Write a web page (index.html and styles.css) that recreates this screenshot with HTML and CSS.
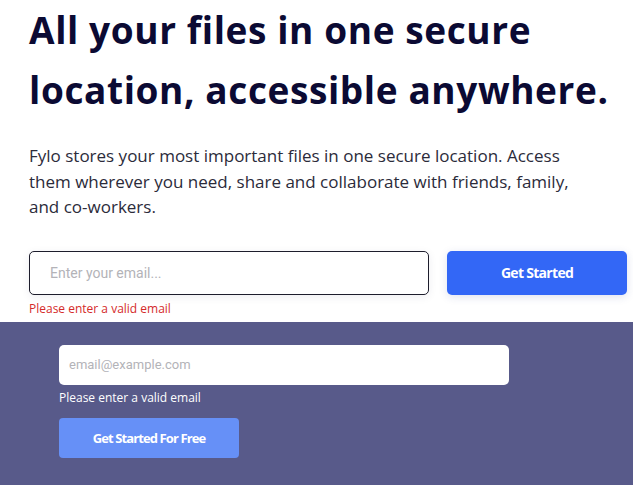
FILE: index.html
```html
<!DOCTYPE html>
<html lang="en">
<head>
<meta charset="utf-8">
<title>Fylo</title>
<link rel="stylesheet" href="styles.css">
</head>
<body>
  <section class="hero">
    <h1 class="hero__title">All your files in one secure location, accessible anywhere.</h1>
    <p class="hero__text">Fylo stores your most important files in one secure location. Access them wherever you need, share and collaborate with friends, family, and co-workers.</p>
    <form class="hero__form">
      <div class="field">
        <input class="field__input" type="email" placeholder="Enter your email...">
        <span class="field__error">Please enter a valid email</span>
      </div>
      <button class="btn btn--primary" type="button">Get Started</button>
    </form>
  </section>
  <section class="cta">
    <form class="cta__form">
      <input class="cta__input" type="email" placeholder="email@example.com">
      <span class="cta__error">Please enter a valid email</span>
      <button class="btn btn--light" type="button">Get Started For Free</button>
    </form>
  </section>
</body>
</html>
```

FILE: styles.css
```css
* { box-sizing: border-box; }

html, body {
  margin: 0;
  padding: 0;
  background: #ffffff;
  font-family: "Open Sans", "Liberation Sans", sans-serif;
}

.hero {
  padding: 0 0 0 29px;
}

.hero__title {
  margin: 0;
  font-family: "Open Sans", sans-serif;
  font-weight: 700;
  font-size: 37px;
  letter-spacing: 0.6px;
  line-height: 60px;
  color: #0b0a33;
}

.hero__text {
  margin: 23px 0 0;
  max-width: 570px;
  font-size: 17px;
  line-height: 25.5px;
  color: #2b2b3a;
}

.hero__form {
  display: flex;
  gap: 18px;
  margin-top: 31px;
  padding-bottom: 4px;
}

.field {
  display: flex;
  flex-direction: column;
  flex: 0 0 400px;
}

.field__input {
  height: 44px;
  width: 100%;
  border: 1px solid #1d1d2c;
  border-radius: 5px;
  padding: 0 20px;
  font-family: Roboto, sans-serif;
  font-size: 14px;
  box-shadow: 0 2px 8px rgba(40, 40, 80, 0.08);
  outline: none;
}

.field__input::placeholder,
.cta__input::placeholder {
  color: #b3b3b8;
}

.field__error {
  margin-top: 4px;
  font-size: 12px;
  line-height: 19px;
  color: #d42a2a;
}

.btn {
  border: 0;
  border-radius: 5px;
  color: #ffffff;
  font-family: "Open Sans", sans-serif;
  font-weight: 700;
  letter-spacing: -0.7px;
  cursor: pointer;
}

.btn--primary {
  flex: 0 0 180px;
  height: 44px;
  font-size: 14px;
  background: #3367f6;
  box-shadow: 0 2px 8px rgba(40, 60, 140, 0.15);
}

.cta {
  background: #585a8a;
  padding: 23px 59px 27px;
}

.cta__form {
  display: flex;
  flex-direction: column;
  align-items: flex-start;
}

.cta__input {
  width: 450px;
  height: 40px;
  border: 0;
  border-radius: 5px;
  padding: 0 10px;
  font-family: Roboto, sans-serif;
  font-size: 13px;
  outline: none;
}

.cta__error {
  margin-top: 5px;
  font-size: 12px;
  line-height: 15px;
  color: #ffffff;
}

.btn--light {
  margin-top: 13px;
  width: 180px;
  height: 40px;
  font-size: 13px;
  letter-spacing: -0.9px;
  background: #6690f7;
  border-radius: 4px;
}
```
